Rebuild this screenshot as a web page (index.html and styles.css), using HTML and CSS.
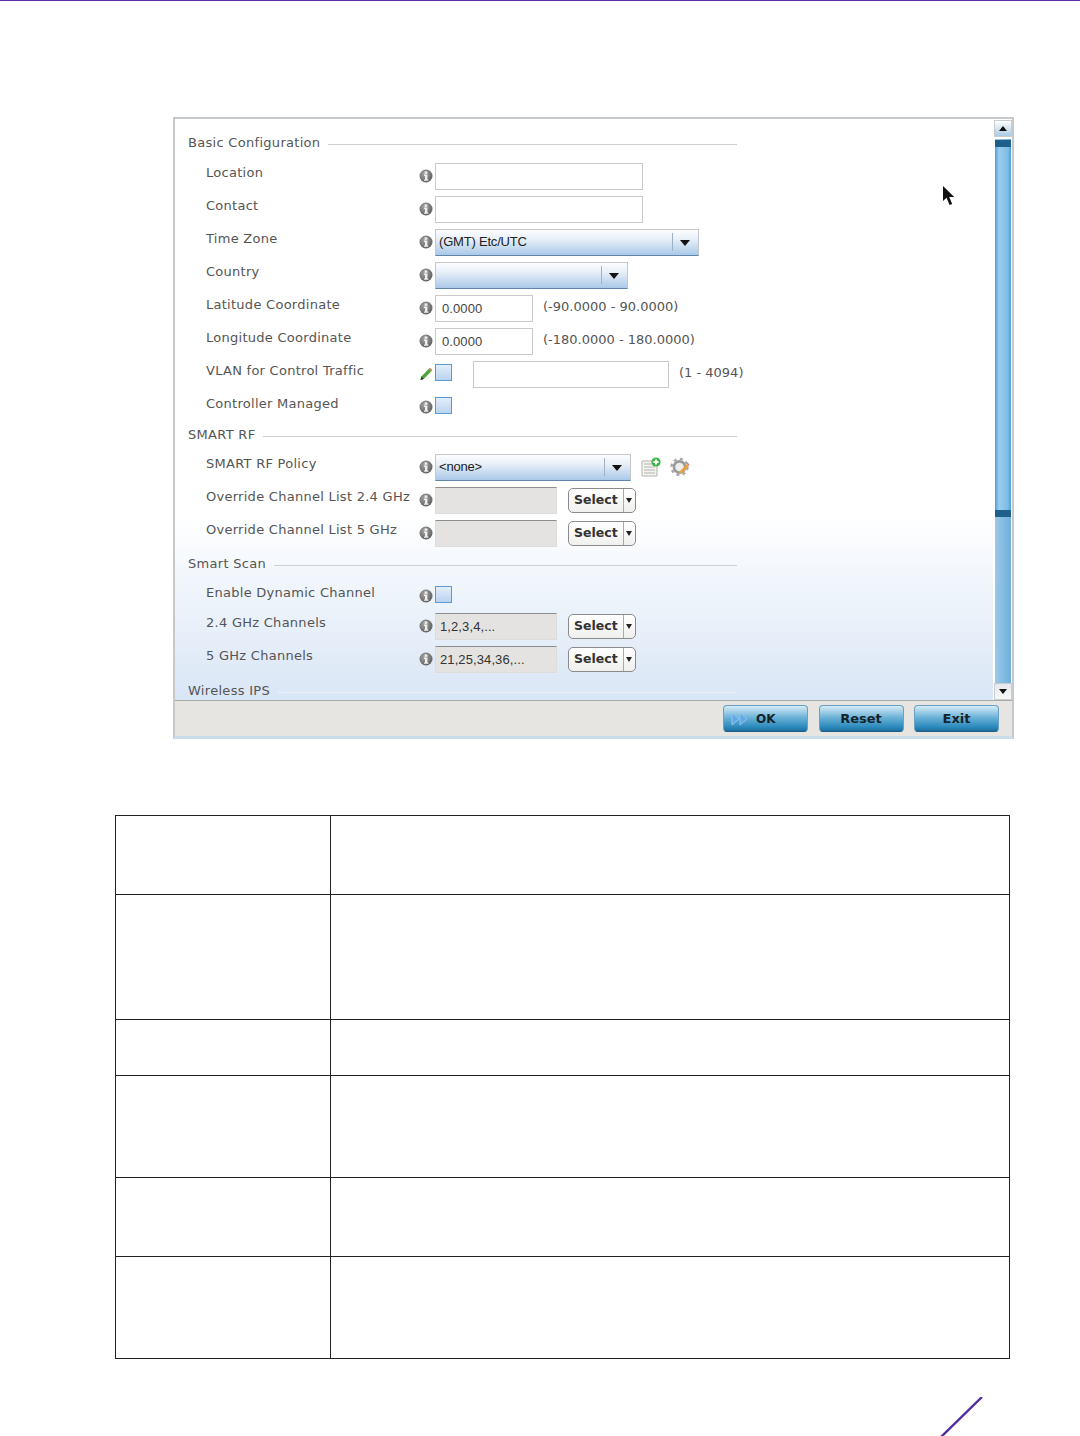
FILE: index.html
```html
<!DOCTYPE html>
<html lang="en">
<head>
  <meta charset="UTF-8">
  <title>Basic Configuration</title>
  <link rel="stylesheet" href="styles.css">
</head>
<body>
  <svg class="defs" width="0" height="0">
    <defs>
      <radialGradient id="infoFill" cx="40%" cy="35%" r="70%">
        <stop offset="0" stop-color="#a5a5a5"/>
        <stop offset="1" stop-color="#5c5c5c"/>
      </radialGradient>
      <symbol id="info" viewBox="0 0 14 14">
        <circle cx="7" cy="7" r="6.5" fill="url(#infoFill)"/>
        <rect x="5.6" y="2.4" width="2.8" height="2.4" fill="#eee"/>
        <path d="M5 5.6h3.4v4.8h1v1.4H5v-1.4h1V7H5z" fill="#eee"/>
      </symbol>
    </defs>
  </svg>

  <div class="page">
    <div class="window">
      <div class="main">
        <div class="panel">
          <div class="form">
            <div class="legend legend-first"><span>Basic Configuration</span><i></i></div>
            <div class="row">
              <label>Location</label>
              <svg class="info"><use href="#info"/></svg>
              <div class="input w-wide"></div>
            </div>
            <div class="row">
              <label>Contact</label>
              <svg class="info"><use href="#info"/></svg>
              <div class="input w-wide"></div>
            </div>
            <div class="row">
              <label>Time Zone</label>
              <svg class="info"><use href="#info"/></svg>
              <div class="select w-zone">(GMT) Etc/UTC<b></b></div>
            </div>
            <div class="row">
              <label>Country</label>
              <svg class="info"><use href="#info"/></svg>
              <div class="select w-country"><b></b></div>
            </div>
            <div class="row">
              <label>Latitude Coordinate</label>
              <svg class="info"><use href="#info"/></svg>
              <div class="input w-num">0.0000</div>
              <span class="hint">(-90.0000 - 90.0000)</span>
            </div>
            <div class="row">
              <label>Longitude Coordinate</label>
              <svg class="info"><use href="#info"/></svg>
              <div class="input w-num">0.0000</div>
              <span class="hint">(-180.0000 - 180.0000)</span>
            </div>
            <div class="row">
              <label>VLAN for Control Traffic</label>
              <svg class="info" viewBox="0 0 14 14">
                <path d="M1.5 13l.8-3.4 7.6-7.8 2.5 2.4-7.6 7.8z" fill="#4fa63a"/>
                <path d="M9.9 1.8l1-1 2.5 2.4-1 1z" fill="#d9705a"/>
                <path d="M1.5 13l.8-3.4 2.6 2.5z" fill="#333"/>
              </svg>
              <div class="check"></div>
              <div class="input w-vlan"></div>
              <span class="hint">(1 - 4094)</span>
            </div>
            <div class="row row-short">
              <label>Controller Managed</label>
              <svg class="info"><use href="#info"/></svg>
              <div class="check"></div>
            </div>

            <div class="legend"><span>SMART RF</span><i></i></div>
            <div class="row">
              <label>SMART RF Policy</label>
              <svg class="info"><use href="#info"/></svg>
              <div class="select w-policy">&lt;none&gt;<b></b></div>
              <svg class="tool" viewBox="0 0 20 20">
                <path d="M1 4h15v15H1z" fill="#f4f4f0" stroke="#b5b5ae"/>
                <path d="M3 7h8M3 10h11M3 13h11M3 16h11" stroke="#b4b4ae"/>
                <circle cx="15" cy="5" r="4.6" fill="#3fb54a"/>
                <path d="M12.5 5h5M15 2.5v5" stroke="#fff" stroke-width="1.8"/>
              </svg>
              <svg class="tool tool-gear" viewBox="0 0 20 20">
                <circle cx="9.5" cy="10" r="5.6" fill="#eee" stroke="#9a9a9a" stroke-width="2.6"/>
                <circle cx="9.5" cy="10" r="8" fill="none" stroke="#a8a8a8" stroke-width="2.4" stroke-dasharray="3 3.3"/>
                <path d="M9 17l1-3 7-7 2 2-7 7z" fill="#e8a33a"/>
                <path d="M16.5 6.5l1-1 2 2-1 1z" fill="#d56fa0"/>
              </svg>
            </div>
            <div class="row">
              <label>Override Channel List 2.4 GHz</label>
              <svg class="info"><use href="#info"/></svg>
              <div class="input input-off w-list"></div>
              <div class="pick">Select<b></b></div>
            </div>
            <div class="row">
              <label>Override Channel List 5 GHz</label>
              <svg class="info"><use href="#info"/></svg>
              <div class="input input-off w-list"></div>
              <div class="pick">Select<b></b></div>
            </div>

            <div class="legend"><span>Smart Scan</span><i></i></div>
            <div class="row row-short">
              <label>Enable Dynamic Channel</label>
              <svg class="info"><use href="#info"/></svg>
              <div class="check"></div>
            </div>
            <div class="row">
              <label>2.4 GHz Channels</label>
              <svg class="info"><use href="#info"/></svg>
              <div class="input input-off w-list">1,2,3,4,...</div>
              <div class="pick">Select<b></b></div>
            </div>
            <div class="row">
              <label>5 GHz Channels</label>
              <svg class="info"><use href="#info"/></svg>
              <div class="input input-off w-list">21,25,34,36,...</div>
              <div class="pick">Select<b></b></div>
            </div>

            <div class="legend legend-last"><span>Wireless IPS</span><i></i></div>
          </div>

          <svg class="cursor" width="14" height="20" viewBox="0 0 14 20">
            <path d="M1 0v15l3.5-3.2L7.6 19l2.6-1.1-3-7h5z" fill="#111"/>
          </svg>
        </div>

        <div class="scrollbar">
          <div class="arrow arrow-up"></div>
          <div class="track">
            <div class="thumb"></div>
          </div>
          <div class="arrow arrow-down"></div>
        </div>
      </div>

      <div class="footer">
        <div class="btn btn-ok">
          <svg width="18" height="14" viewBox="0 0 18 14">
            <path d="M1 1l7 6-7 6zM9 1l7 6-7 6z" fill="#5fa9e6" stroke="#8fc6ee"/>
          </svg>
          <span>OK</span>
        </div>
        <div class="btn">Reset</div>
        <div class="btn">Exit</div>
      </div>
    </div>

    <table class="desc">
      <tr class="h79"><td class="col-name"></td><td></td></tr>
      <tr class="h125"><td></td><td></td></tr>
      <tr class="h56"><td></td><td></td></tr>
      <tr class="h102"><td></td><td></td></tr>
      <tr class="h79"><td></td><td></td></tr>
      <tr class="h102"><td></td><td></td></tr>
    </table>

    <div class="brand">
      <svg width="44" height="40" viewBox="0 0 44 40">
        <path d="M42 0L1 40" stroke="#4f2d9f" stroke-width="2.4" fill="none"/>
      </svg>
    </div>
  </div>
</body>
</html>
```

FILE: styles.css
```css
* {
  box-sizing: border-box;
}
html, body {
  margin: 0;
  padding: 0;
  background: #fff;
}
.defs {
  position: absolute;
}
.page {
  height: 1436px;
  overflow: hidden;
  padding-top: 116px;
  border-top: 1px solid #5a2ea6;
  font-family: "DejaVu Sans", sans-serif;
}

/* window */
.window {
  width: 841px;
  height: 622px;
  margin-left: 173px;
  border: 2px solid #c6c9cb;
  border-bottom: 3px solid #c8dcec;
  display: flex;
  flex-direction: column;
}
.main {
  display: flex;
  height: 581px;
}
.panel {
  position: relative;
  flex: 1;
  overflow: hidden;
  background: linear-gradient(180deg, #fff 0, #fff 68%, #d9e6f6 100%);
}
.form {
  padding-left: 13px;
}
.legend {
  display: flex;
  align-items: center;
  gap: 8px;
  width: 549px;
  height: 27px;
  font-size: 13px;
  letter-spacing: 0.3px;
  color: #555;
}
.legend i {
  flex: 1;
  height: 1px;
  margin-top: 3px;
  background: #cfcfcf;
}
.legend-first {
  height: 27px;
  margin-top: 10px;
  margin-bottom: 4px;
}
.legend-last {
  margin-top: 1px;
}
.legend-last i {
  background: #edf2f9;
}
.row {
  display: flex;
  height: 33px;
  padding-left: 18px;
  padding-top: 3px;
}
.row-short {
  height: 30px;
}
.row + .legend {
  margin-bottom: 3px;
}
.row label {
  flex: none;
  width: 212px;
  margin-top: -2px;
  line-height: 24px;
  font-size: 13px;
  letter-spacing: 0.27px;
  color: #555;
  white-space: nowrap;
}
.info {
  width: 14px;
  height: 14px;
  margin: 6px 2px 0 1px;
  flex: none;
}

.input {
  flex: none;
  height: 27px;
  border: 1px solid #c9c9c9;
  background: #fff;
  padding-left: 6px;
  font: 13px/26px "Liberation Sans", sans-serif;
  letter-spacing: 0.1px;
  color: #444;
}
.input-off {
  background: #e4e3e1;
  border-color: #dcdcda;
  border-top-color: #8d8d8d;
  padding-left: 4px;
  color: #333;
}
.w-wide { width: 208px; }
.w-num { width: 98px; }
.w-vlan { width: 196px; margin-left: 21px; }
.w-list { width: 122px; }
.w-zone { width: 264px; }
.w-country { width: 193px; }
.w-policy { width: 196px; }

.hint {
  margin-left: 10px;
  line-height: 24px;
  font-size: 13px;
  color: #555;
  white-space: nowrap;
}

.select {
  flex: none;
  position: relative;
  height: 27px;
  padding-left: 3px;
  border: 1px solid #c4c8cc;
  border-bottom-color: #5f86aa;
  background: linear-gradient(180deg, #fdfdfe 0, #e9f0f8 35%, #a9c9e8 100%);
  font: 13px/23px "Liberation Sans", sans-serif;
  letter-spacing: -0.2px;
  color: #222;
}
.select b {
  position: absolute;
  top: 3px;
  right: 0;
  width: 26px;
  height: 18px;
  border-left: 1px solid #9fb1c2;
}
.select b::after {
  content: "";
  position: absolute;
  top: 7px;
  left: 7px;
  border: 5px solid transparent;
  border-top: 6px solid #111;
  border-bottom: 0;
}

.check {
  flex: none;
  width: 17px;
  height: 17px;
  margin-top: 3px;
  border: 1px solid #5b9bd5;
  background: linear-gradient(180deg, #e4eefa, #b9d3ef);
}

.pick {
  flex: none;
  position: relative;
  width: 68px;
  height: 25px;
  margin: 1px 0 0 11px;
  padding-left: 5px;
  border: 1px solid #8b8b8b;
  border-radius: 5px;
  background: linear-gradient(180deg, #fff, #f0f0ee);
  font-weight: bold;
  font-size: 12.5px;
  line-height: 21px;
  color: #333;
}
.pick b {
  position: absolute;
  top: 0;
  bottom: 0;
  right: 0;
  width: 12px;
  border-left: 1px solid #aaa;
}
.pick b::after {
  content: "";
  position: absolute;
  top: 9px;
  left: 2px;
  border: 3.5px solid transparent;
  border-top: 5px solid #222;
  border-bottom: 0;
}

.tool {
  flex: none;
  width: 20px;
  height: 20px;
  margin: 3px 0 0 10px;
}
.tool-gear {
  margin-left: 9px;
}

.cursor {
  position: absolute;
  top: 67px;
  left: 767px;
}

/* scrollbar */
.scrollbar {
  flex: none;
  width: 19px;
  margin-top: 1px;
  display: flex;
  flex-direction: column;
}
.arrow {
  position: relative;
  height: 17px;
  flex: none;
  margin-left: 1px;
  border: 1px solid #c9ccce;
  background: linear-gradient(180deg, #fff, #a9cbe6);
}
.arrow-down {
  background: linear-gradient(180deg, #e6e9ec, #f8f8f8);
}
.arrow::after {
  content: "";
  position: absolute;
  left: 4px;
  top: 5px;
  border: 4px solid transparent;
}
.arrow-up::after {
  border-bottom: 5px solid #111;
  border-top: 0;
}
.arrow-down::after {
  border-top: 5px solid #111;
  border-bottom: 0;
}
.track {
  flex: 1;
  margin: 2px 1px 0 2px;
  background: linear-gradient(90deg, #9bc8e8, #6fb0dc);
  padding: 1px 0 0 0;
}
.thumb {
  height: 377px;
  border-top: 7px solid #1f5f8b;
  border-bottom: 7px solid #1f5f8b;
  background: linear-gradient(90deg, #4d9ed6 0, #9ccdef 25%, #7cbce6 80%, #4d9ed6 100%);
}

/* footer */
.footer {
  flex: none;
  display: flex;
  justify-content: flex-end;
  gap: 10.5px;
  height: 36px;
  padding: 4px 13px 0 0;
  border-top: 1px solid #a9a9a9;
  background: #e7e5e1;
}
.btn {
  display: flex;
  align-items: center;
  justify-content: center;
  width: 85px;
  height: 27px;
  border: 1px solid #6aa0c2;
  border-bottom-color: #1f5c86;
  border-radius: 4px;
  background: linear-gradient(180deg, #d6ecf7 0, #6db3d8 45%, #2a88bb 85%, #1e6d9c 100%);
  font-weight: bold;
  font-size: 13px;
  color: #15232c;
}
.btn-ok {
  justify-content: flex-start;
  padding-left: 7px;
}
.btn-ok span {
  margin-left: 7px;
  font-size: 12px;
}

/* description table */
.desc {
  width: 895px;
  margin: 76px 0 0 115px;
  border-collapse: collapse;
  table-layout: fixed;
}
.desc td {
  border: 1px solid #222;
  padding: 0;
}
.col-name {
  width: 215px;
}
.h56 { height: 56px; }
.h79 { height: 79px; }
.h102 { height: 102px; }
.h125 { height: 125px; }

.brand {
  display: flex;
  justify-content: flex-end;
  width: 984px;
  margin-top: 38px;
}
```
